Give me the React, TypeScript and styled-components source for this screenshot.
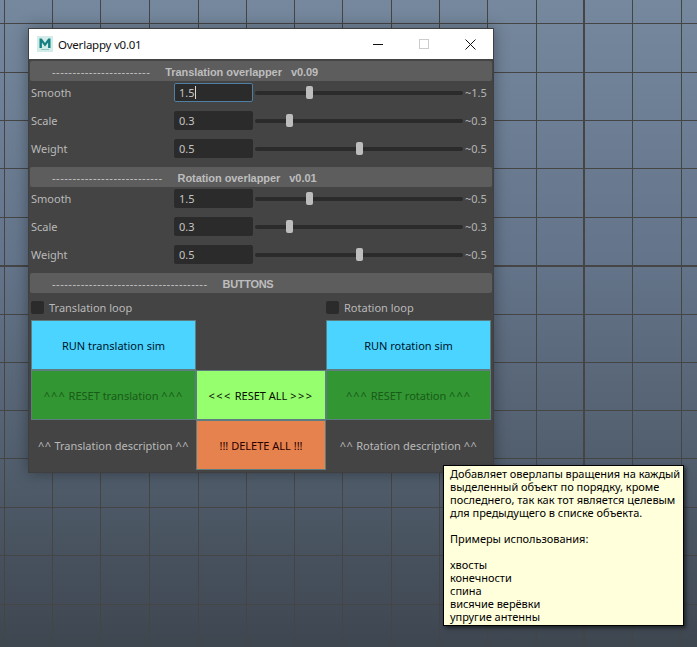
import React from "react";
import styled, { createGlobalStyle } from "styled-components";

const Global = createGlobalStyle`
  html, body { margin: 0; padding: 0; background: #3e4650; }
  * { box-sizing: border-box; }
`;

const Desktop = styled.div`
  position: relative;
  width: 697px;
  height: 647px;
  overflow: hidden;
  background: linear-gradient(180deg, #75889d 0%, #64748a 40%, #525f6e 70%, #3e4650 100%);
`;

const GridArt = styled.svg`
  position: absolute;
  inset: 0;
`;

const Win = styled.div`
  position: absolute;
  left: 28px;
  top: 28px;
  width: 466px;
  height: 445px;
  display: flex;
  flex-direction: column;
  border: 1px solid #3f3f3f;
  background: #444444;
  box-shadow: 0 0 14px rgba(0, 0, 0, 0.35);
`;

const TitleBar = styled.div`
  height: 30px;
  flex: none;
  background: #ffffff;
  display: flex;
  align-items: center;
  padding-left: 8px;
`;

const TitleText = styled.div`
  margin-left: 5px;
  font: 11.5px "Noto Sans", sans-serif;
  letter-spacing: -0.23px;
  color: #111;
`;

const WinControls = styled.div`
  margin-left: auto;
  display: flex;
  align-items: center;
`;

const WinControl = styled.div`
  width: 46px;
  height: 30px;
  display: flex;
  align-items: center;
  justify-content: center;
`;

const Body = styled.div`
  flex: 1;
  display: flex;
  flex-direction: column;
  padding: 2px 0 0 1px;
  font: 11px "Noto Sans", sans-serif;
  color: #b9b9b9;
`;

const Header = styled.div`
  height: 20px;
  flex: none;
  margin-right: 1px;
  display: flex;
  align-items: center;
  padding: 1px 0 0 22px;
  gap: 15px;
  background: #5d5d5d;
  border-radius: 2px;
  white-space: pre;
`;

const Dashes = styled.span`
  color: #c4c4c4;
  font: 11px "Liberation Sans", sans-serif;
  letter-spacing: 0.43px;
`;

const HeaderTitle = styled.span<{ $tight?: boolean }>`
  font: bold 11px "Liberation Sans", sans-serif;
  color: #bdbdbd;
  letter-spacing: ${(p) => (p.$tight ? "-0.3px" : "-0.06px")};
`;

const Rows = styled.div`
  display: flex;
  flex-direction: column;
  gap: 9px;
  padding: 2px 0 9px;
`;

const Row = styled.div`
  height: 19px;
  display: grid;
  grid-template-columns: 144px 79px 1fr 30px;
  align-items: center;
`;

const RowLabel = styled.div`
  padding-left: 1px;
`;

const Field = styled.div<{ $focus?: boolean }>`
  height: 19px;
  border-radius: 2px;
  background: #2b2b2b;
  color: #c4c4c4;
  display: flex;
  align-items: center;
  padding-left: 4px;
  border: 1px solid ${(p) => (p.$focus ? "#4f7fa3" : "#2b2b2b")};
`;

const Caret = styled.span`
  width: 1px;
  height: 13px;
  background: #d8d8d8;
`;

const Track = styled.div`
  position: relative;
  height: 4px;
  margin: 0 0 0 2px;
  background: #2b2b2b;
  border-radius: 2px;
`;

const Thumb = styled.div`
  position: absolute;
  top: -5px;
  width: 7px;
  height: 13px;
  margin-left: -3px;
  background: #bdbdbd;
  border-radius: 2px;
`;

const Tilde = styled.div`
  padding-left: 2px;
  color: #b4b4b4;
`;

const CheckRow = styled.div`
  height: 27px;
  flex: none;
  display: grid;
  grid-template-columns: 295px 165px;
  align-items: center;
  padding: 2px 0 0 1px;
`;

const CheckItem = styled.div`
  display: flex;
  align-items: center;
  gap: 5px;
`;

const CheckBox = styled.div`
  width: 13px;
  height: 13px;
  background: #2b2b2b;
  border-radius: 2px;
`;

const ButtonGrid = styled.div`
  display: grid;
  grid-template-columns: 165px 130px 165px;
  grid-auto-rows: 50px;
  margin-left: 1px;
`;

const Cell = styled.div<{ $bg: string; $fg: string; $line?: boolean }>`
  display: flex;
  align-items: center;
  justify-content: center;
  background: ${(p) => p.$bg};
  color: ${(p) => p.$fg};
  border: ${(p) => (p.$line ? "1px solid #5e7d80" : "none")};
  white-space: pre;
`;

const Marks = styled.span<{ $gap: number }>`
  letter-spacing: ${(p) => p.$gap}px;
`;

const Tip = styled.div`
  position: absolute;
  left: 443px;
  top: 465px;
  width: 241px;
  height: 161px;
  padding: 1px 0 0 6px;
  background: #ffffdc;
  border: 1px solid #000;
  box-shadow: 2px 2px 4px rgba(0, 0, 0, 0.55);
  font: 11px/13px "Noto Sans", sans-serif;
  letter-spacing: -0.03px;
  color: #000;
  white-space: pre;
`;

const sliders = [
  [
    { name: "Smooth", value: "1.5", pos: 26, focus: true },
    { name: "Scale", value: "0.3", pos: 16.5 },
    { name: "Weight", value: "0.5", pos: 50 },
  ],
  [
    { name: "Smooth", value: "1.5", pos: 26, tilde: "0.5" },
    { name: "Scale", value: "0.3", pos: 16.5 },
    { name: "Weight", value: "0.5", pos: 50 },
  ],
] as { name: string; value: string; pos: number; focus?: boolean; tilde?: string }[][];

const vx = [4, 52, 100, 149, 198, 246, 294, 342, 391, 439, 487, 536, 584, 632, 681];
const hy = [23, 72, 120, 168, 217, 266, 314, 362, 410, 458, 507, 555, 604];

const tipText = `Добавляет оверлапы вращения на каждый
выделенный объект по порядку, кроме
последнего, так как тот является целевым
для предыдущего в списке объекта.

Примеры использования:

хвосты
конечности
спина
висячие верёвки
упругие антенны`;

function SliderRows({ rows }: { rows: typeof sliders[number] }) {
  return (
    <Rows>
      {rows.map((r) => (
        <Row key={r.name}>
          <RowLabel>{r.name}</RowLabel>
          <Field $focus={r.focus}>
            {r.value}
            {r.focus && <Caret />}
          </Field>
          <Track>
            <Thumb style={{ left: `${r.pos}%` }} />
          </Track>
          <Tilde>~{r.tilde ?? r.value}</Tilde>
        </Row>
      ))}
    </Rows>
  );
}

export default function App() {
  return (
    <Desktop>
      <Global />
      <GridArt width={697} height={647}>
        {vx.map((x) => (
          <rect key={x} x={x - (x === 584 ? 1 : 0)} y={0} width={x === 584 ? 2 : 1} height={647} fill="#454545" />
        ))}
        {hy.map((y) => (
          <rect key={y} x={0} y={y - (y === 266 ? 1 : 0)} width={697} height={y === 266 ? 2 : 1} fill="#454545" />
        ))}
      </GridArt>
      <Win>
        <TitleBar>
          <svg width="16" height="16" viewBox="0 0 16 16">
            <rect width="16" height="16" fill="#d3ece9" />
            <path d="M2.5 12V2.5h2.2L8 7l3.3-4.5h2.2V12h-2.4V6.6L8 10.4 4.9 6.6V12z" fill="#127f82" />
            <rect x="4" y="13" width="8" height="1" fill="#8fc9c6" />
          </svg>
          <TitleText>Overlappy v0.01</TitleText>
          <WinControls>
            <WinControl>
              <svg width="10" height="10" viewBox="0 0 10 10">
                <rect x="0" y="5" width="10" height="1" fill="#111" />
              </svg>
            </WinControl>
            <WinControl>
              <svg width="10" height="10" viewBox="0 0 10 10">
                <rect x="0.5" y="0.5" width="9" height="9" fill="none" stroke="#ccc" />
              </svg>
            </WinControl>
            <WinControl>
              <svg width="11" height="11" viewBox="0 0 11 11">
                <path d="M0.5 0.5l10 10M10.5 0.5l-10 10" stroke="#111" fill="none" />
              </svg>
            </WinControl>
          </WinControls>
        </TitleBar>
        <Body>
          <Header>
            <Dashes>------------------------</Dashes>
            <HeaderTitle>Translation overlapper   v0.09</HeaderTitle>
          </Header>
          <SliderRows rows={sliders[0]} />
          <Header>
            <Dashes>---------------------------</Dashes>
            <HeaderTitle>Rotation overlapper   v0.01</HeaderTitle>
          </Header>
          <SliderRows rows={sliders[1]} />
          <Header>
            <Dashes>--------------------------------------</Dashes>
            <HeaderTitle $tight>BUTTONS</HeaderTitle>
          </Header>
          <CheckRow>
            <CheckItem>
              <CheckBox />
              Translation loop
            </CheckItem>
            <CheckItem>
              <CheckBox />
              Rotation loop
            </CheckItem>
          </CheckRow>
          <ButtonGrid>
            <Cell $bg="#4bd4ff" $fg="#00142a" $line>RUN translation sim</Cell>
            <Cell $bg="transparent" $fg="transparent" />
            <Cell $bg="#4bd4ff" $fg="#00142a" $line>RUN rotation sim</Cell>
            <Cell $bg="#329632" $fg="#195a19" $line>
              <Marks $gap={1}>^^^</Marks> RESET translation <Marks $gap={1}>^^^</Marks>
            </Cell>
            <Cell $bg="#96ff6e" $fg="#0a0f05" $line>
              <Marks $gap={1.5}>{"<<<"}</Marks> RESET ALL <Marks $gap={1.5}>{">>>"}</Marks>
            </Cell>
            <Cell $bg="#329632" $fg="#195a19" $line>
              <Marks $gap={1}>^^^</Marks> RESET rotation <Marks $gap={1}>^^^</Marks>
            </Cell>
            <Cell $bg="transparent" $fg="#b9b9b9">
              <Marks $gap={0.5}>^^</Marks> Translation description <Marks $gap={0.5}>^^</Marks>
            </Cell>
            <Cell $bg="#e6824e" $fg="#280000" $line>!!! DELETE ALL !!!</Cell>
            <Cell $bg="transparent" $fg="#b9b9b9">
              <Marks $gap={0.5}>^^</Marks> Rotation description <Marks $gap={0.5}>^^</Marks>
            </Cell>
          </ButtonGrid>
        </Body>
      </Win>
      <Tip>{tipText}</Tip>
    </Desktop>
  );
}
